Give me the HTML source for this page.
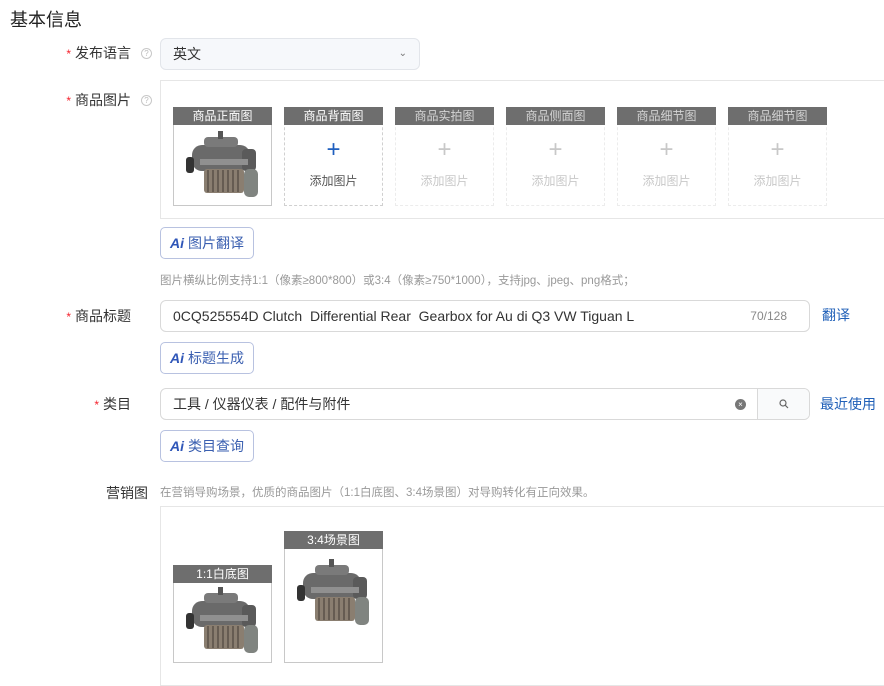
<!DOCTYPE html>
<html><head><meta charset="utf-8"><style>
*{margin:0;padding:0;box-sizing:border-box}
body{width:884px;height:674px;overflow:hidden;background:#fff;font-family:"Liberation Sans","Noto Sans CJK SC",sans-serif;color:#333;position:relative}
.a{position:absolute}
.lbl{position:absolute;font-size:14px;color:#333;text-align:right;white-space:nowrap}
.lbl i{color:#f5222d;font-style:normal;margin-right:4px;font-size:12px}
.q{position:absolute;width:11px;height:11px;border:1px solid #c8c8c8;border-radius:50%;font-size:8px;color:#bbb;text-align:center;line-height:9px}
.box{position:absolute;border:1px solid #e6e6e6;border-right:none}
.card{position:absolute;width:99px;height:99px;border:1px dashed #d0d0d0}
.card.s{border:1px solid #c8c8c8}
.card.d{border-color:#ececec}
.card .h{height:18px;background:#6e6e6e;color:#fff;font-size:12px;text-align:center;line-height:18px;margin:-1px -1px 0}
.card.d .h{color:#d4d4d4}
.card .p{text-align:center;font-size:24px;color:#1f5fbf;line-height:24px;margin-top:13px;font-weight:300}
.card.d .p{color:#c8c8c8}
.card .t{text-align:center;font-size:12px;color:#555;margin-top:10px}
.card.d .t{color:#c8c8c8}
.btn{position:absolute;height:32px;border:1px solid #b8c2e0;border-radius:5px;font-size:14px;color:#3a5fb0;padding:0 9px;line-height:30px;white-space:nowrap}
.btn b{font-style:italic;font-weight:bold;color:#2f56b8;margin-right:4px;font-size:14px}
.inp{position:absolute;height:32px;border:1px solid #d9d9d9;border-radius:6px;font-size:14px;line-height:30px;padding-left:12px;color:#333;overflow:hidden}
.hint{position:absolute;font-size:11.5px;color:#999;white-space:nowrap}
.link{position:absolute;font-size:14px;color:#2060b8}
</style></head><body>
<svg width="0" height="0" style="position:absolute"><defs>
<g id="pump">
<rect x="10" y="16" width="58" height="26" rx="10" fill="#6a6a6a"/>
<rect x="22" y="8" width="34" height="10" rx="4" fill="#7a7a7a"/>
<rect x="36" y="2" width="5" height="8" fill="#555"/>
<rect x="60" y="20" width="14" height="22" rx="4" fill="#5a5a5a"/>
<rect x="62" y="40" width="14" height="28" rx="5" fill="#808480"/>
<rect x="22" y="40" width="40" height="24" rx="3" fill="#8a7e70"/>
<g stroke="#5a5048" stroke-width="1.5"><path d="M26 41v22M31 41v22M36 41v22M41 41v22M46 41v22M51 41v22M56 41v22"/></g>
<rect x="4" y="28" width="8" height="16" rx="3" fill="#333"/>
<rect x="18" y="30" width="48" height="6" fill="#909090"/>
</g></defs></svg>

<div class="a" style="left:10px;top:6px;font-size:18px;color:#222">基本信息</div>

<div class="lbl" style="right:753px;top:43px"><i>*</i>发布语言</div>
<div class="q" style="left:141px;top:48px">?</div>
<div class="inp" style="left:160px;top:38px;width:260px;height:32px;background:#f6f8fb;border-color:#e2e5ea">英文<span class="a" style="right:12px;top:0;font-size:10px;color:#777">&#8964;</span></div>

<div class="lbl" style="right:753px;top:90px"><i>*</i>商品图片</div>
<div class="q" style="left:141px;top:95px">?</div>
<div class="box" style="left:160px;top:80px;width:724px;height:139px"></div>
<div class="card s" style="left:173px;top:107px"><div class="h">商品正面图</div><svg width="80" height="72" viewBox="0 0 80 72" style="margin:4px 0 0 8px"><use href="#pump"/></svg></div>
<div class="card" style="left:284px;top:107px"><div class="h">商品背面图</div><div class="p">+</div><div class="t">添加图片</div></div>
<div class="card d" style="left:395px;top:107px"><div class="h">商品实拍图</div><div class="p">+</div><div class="t">添加图片</div></div>
<div class="card d" style="left:506px;top:107px"><div class="h">商品侧面图</div><div class="p">+</div><div class="t">添加图片</div></div>
<div class="card d" style="left:617px;top:107px"><div class="h">商品细节图</div><div class="p">+</div><div class="t">添加图片</div></div>
<div class="card d" style="left:728px;top:107px"><div class="h">商品细节图</div><div class="p">+</div><div class="t">添加图片</div></div>

<div class="btn" style="left:160px;top:227px;width:94px"><b>Ai</b>图片翻译</div>
<div class="hint" style="left:160px;top:272px">图片横纵比例支持1:1（像素≥800*800）或3:4（像素≥750*1000），支持jpg、jpeg、png格式；</div>

<div class="lbl" style="right:753px;top:306px"><i>*</i>商品标题</div>
<div class="inp" style="left:160px;top:300px;width:650px">0CQ525554D Clutch&nbsp; Differential Rear&nbsp; Gearbox for Au di Q3 VW Tiguan L<span class="a" style="right:22px;top:0;font-size:12px;color:#888">70/128</span></div>
<div class="link" style="left:822px;top:305px">翻译</div>
<div class="btn" style="left:160px;top:342px;width:94px"><b>Ai</b>标题生成</div>

<div class="lbl" style="right:753px;top:394px"><i>*</i>类目</div>
<div class="inp" style="left:160px;top:388px;width:650px">工具 / 仪器仪表 / 配件与附件
<span class="a" style="left:574px;top:10px;width:11px;height:11px;border-radius:50%;background:#777;color:#fff;font-size:8px;line-height:11px;text-align:center">×</span>
<span class="a" style="left:596px;top:0;width:53px;height:30px;border-left:1px solid #d9d9d9;background:#f9fafb"><svg width="10" height="10" viewBox="0 0 10 10" style="position:absolute;left:21px;top:10px"><circle cx="4" cy="4" r="3" fill="none" stroke="#666" stroke-width="1.2"/><path d="M6.3 6.3L9 9" stroke="#666" stroke-width="1.2"/></svg></span></div>
<div class="link" style="left:820px;top:394px">最近使用</div>
<div class="btn" style="left:160px;top:430px;width:94px"><b>Ai</b>类目查询</div>

<div class="lbl" style="right:736px;top:483px">营销图</div>
<div class="hint" style="left:160px;top:484px">在营销导购场景，优质的商品图片（1:1白底图、3:4场景图）对导购转化有正向效果。</div>
<div class="box" style="left:160px;top:506px;width:724px;height:180px"></div>
<div class="card s" style="left:173px;top:565px;height:98px"><div class="h">1:1白底图</div><svg width="80" height="72" viewBox="0 0 80 72" style="margin:2px 0 0 8px"><use href="#pump"/></svg></div>
<div class="card s" style="left:284px;top:531px;height:132px"><div class="h">3:4场景图</div><svg width="80" height="72" viewBox="0 0 80 72" style="margin:8px 0 0 8px"><use href="#pump"/></svg></div>
</body></html>
